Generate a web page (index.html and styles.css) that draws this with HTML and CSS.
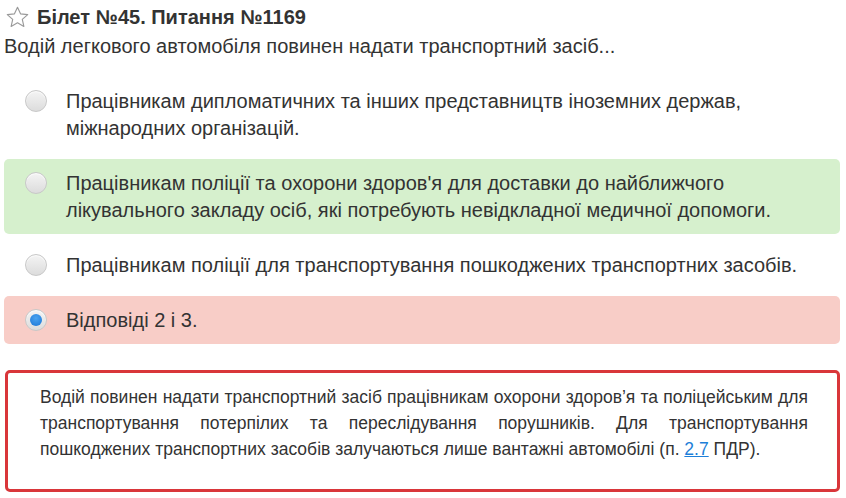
FILE: index.html
```html
<!DOCTYPE html>
<html lang="uk">
<head>
<meta charset="utf-8">
<link rel="stylesheet" href="styles.css">
</head>
<body>
<div class="question">
  <h1 class="title">
    <svg class="star" width="25" height="25" viewBox="0 0 24 24"><path d="M12 2.2l2.9 6.3 6.9.7-5.2 4.6 1.5 6.8L12 17.1l-6.1 3.5 1.5-6.8-5.2-4.6 6.9-.7z" fill="none" stroke="#9a9a9a" stroke-width="1.1" stroke-linejoin="round"/></svg>
    <span>Білет №45. Питання №1169</span>
  </h1>
  <p class="text">Водій легкового автомобіля повинен надати транспортний засіб...</p>
  <ul class="answers">
    <li class="answer"><span class="radio"></span><span class="label">Працівникам дипломатичних та інших представництв іноземних держав, міжнародних організацій.</span></li>
    <li class="answer correct"><span class="radio"></span><span class="label">Працівникам поліції та охорони здоров'я для доставки до найближчого лікувального закладу осіб, які потребують невідкладної медичної допомоги.</span></li>
    <li class="answer"><span class="radio"></span><span class="label">Працівникам поліції для транспортування пошкоджених транспортних засобів.</span></li>
    <li class="answer wrong"><span class="radio checked"></span><span class="label">Відповіді 2 і 3.</span></li>
  </ul>
  <div class="explain">
    <p>Водій повинен надати транспортний засіб працівникам охорони здоров’я та поліцейським для транспортування потерпілих та переслідування порушників. Для транспортування пошкоджених транспортних засобів залучаються лише вантажні автомобілі (п.&nbsp;<a href="#">2.7</a>&nbsp;ПДР).</p>
  </div>
</div>
</body>
</html>
```
FILE: styles.css
```css
* { box-sizing: border-box; }
html, body { margin: 0; padding: 0; background: #fff; }
body {
  font-family: "Liberation Sans", Arial, sans-serif;
  color: #333;
}
.question { padding: 4px 6px 0 4px; }
.title {
  display: flex;
  align-items: center;
  gap: 7px;
  margin: 0;
  font-size: 20px;
  font-weight: bold;
  line-height: 27px;
  height: 27px;
  padding-left: 1px;
}
.star { display: block; }
.text {
  margin: 2px 0 0;
  font-size: 20px;
  line-height: 27px;
}
.answers {
  list-style: none;
  margin: 17px 0 0;
  padding: 0;
  display: flex;
  flex-direction: column;
  gap: 7px;
}
.answer {
  display: flex;
  align-items: flex-start;
  padding: 11px 12px 10px 21px;
  border-radius: 5px;
  font-size: 20px;
  line-height: 27px;
}
.answer.correct { background: #d6f0cd; }
.answer.wrong { background: #f8cdc7; }
.radio {
  flex: none;
  width: 22px;
  height: 22px;
  margin-top: 2px;
  margin-right: 19px;
  border-radius: 50%;
  border: 1px solid #c8c8c8;
  background: linear-gradient(#f4f4f4, #dcdcdc);
  box-shadow: inset 0 1px 1px rgba(255,255,255,0.8);
  position: relative;
}
.radio.checked::after {
  content: "";
  position: absolute;
  left: 4px; top: 4px;
  width: 12px; height: 12px;
  border-radius: 50%;
  background: radial-gradient(circle at 50% 35%, #4aa3f0, #1a76d6);
}
.explain {
  margin-top: 26px;
  border: 3px solid #d9363a;
  border-radius: 5px;
  padding: 11px 29px 27px 32px;
  margin-left: 1px;
}
.explain p {
  margin: 0;
  font-size: 17.5px;
  line-height: 26px;
  text-align: justify;
}
.explain a { color: #1e7fd8; text-decoration: underline; }
```
